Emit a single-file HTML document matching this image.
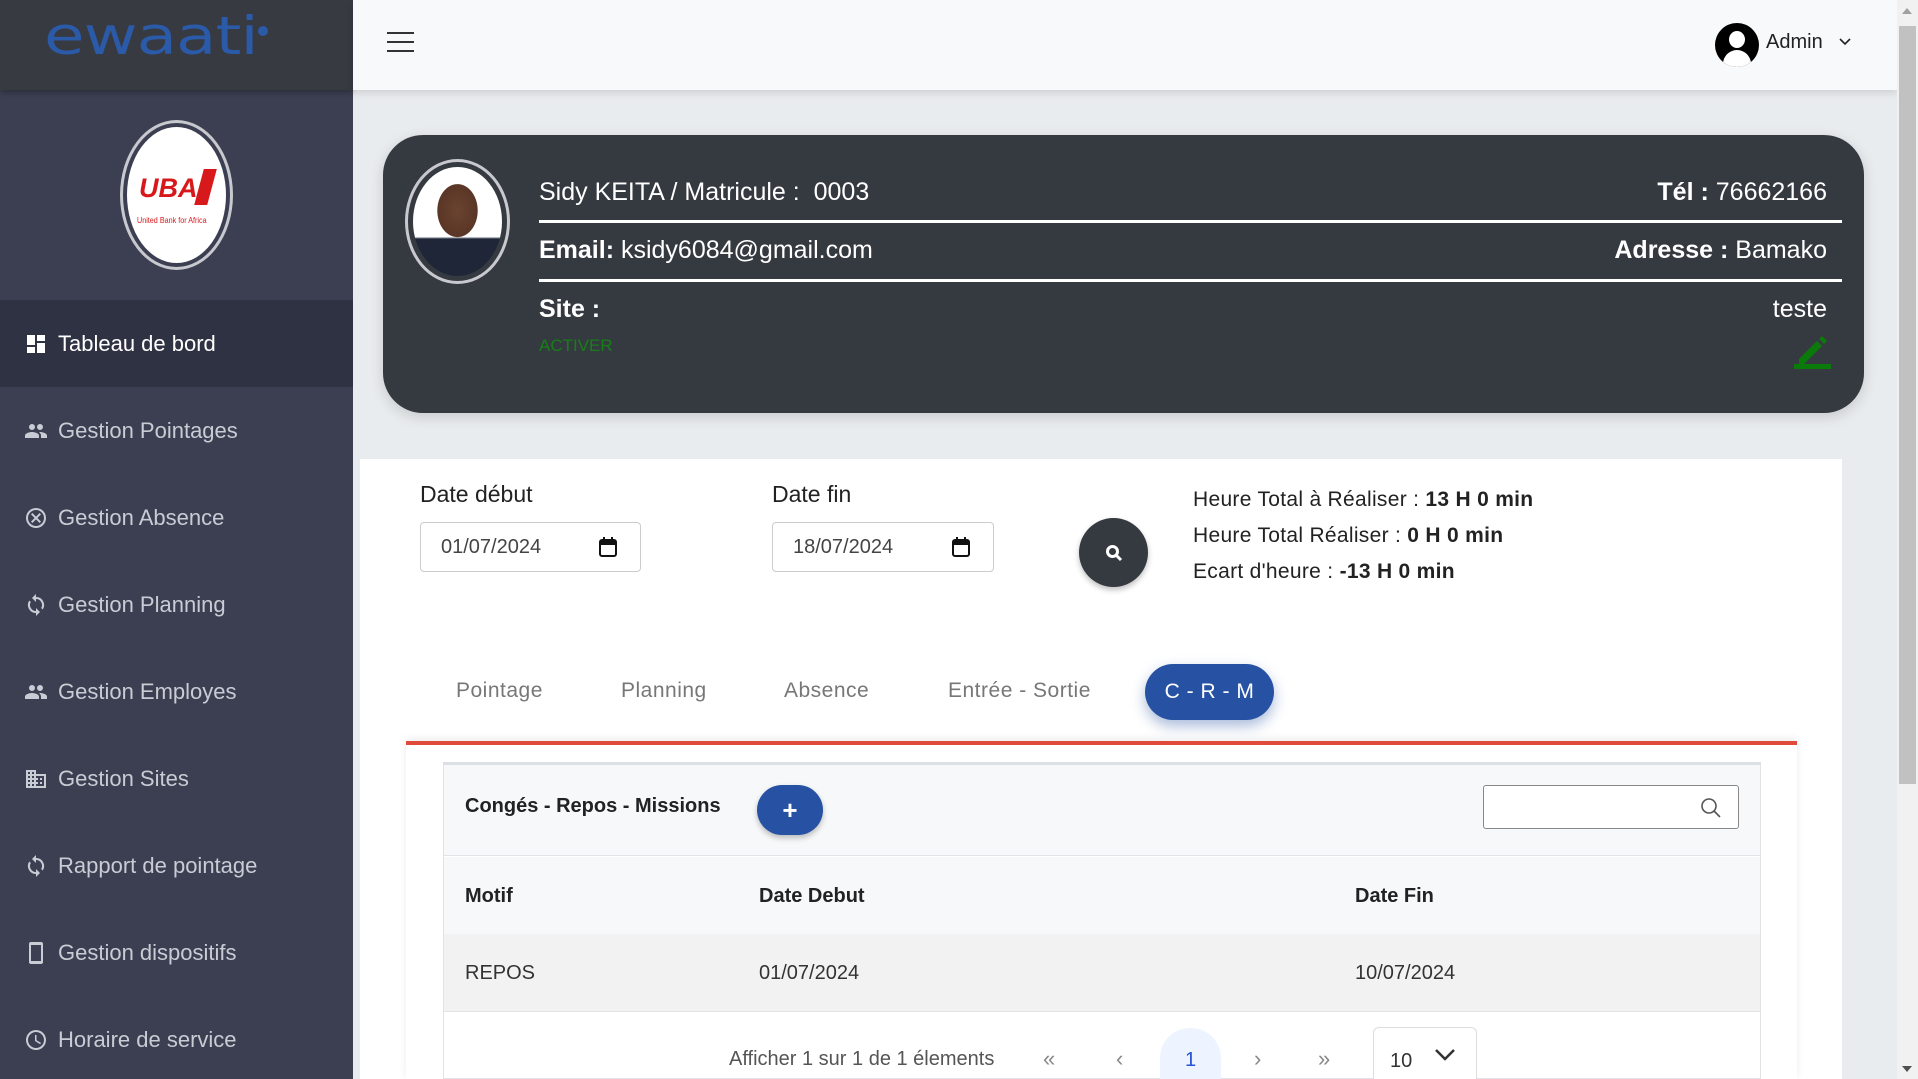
<!DOCTYPE html>
<html><head><meta charset="utf-8"><style>
*{box-sizing:border-box;margin:0;padding:0}
html,body{width:1918px;height:1079px;overflow:hidden}
body{background:#e9ecef;font-family:"Liberation Sans",sans-serif;position:relative}
.abs{position:absolute}
#sb{left:0;top:0;width:353px;height:1079px;background:#3b3f51}
#logo{left:0;top:0;width:353px;height:90px;background:#373a41;box-shadow:0 2px 6px rgba(0,0,0,.3)}
.mi{position:absolute;left:0;width:353px;height:87px;display:flex;align-items:center;color:#c9ccd4;font-size:22px}
.mi svg{margin-left:24px;margin-right:10px;width:24px;height:24px;fill:#c9ccd4}
.mi.act{background:#2e3242;color:#fff}
.mi.act svg{fill:#fff}
#hdr{left:353px;top:0;width:1544px;height:90px;background:#f8f9fa;box-shadow:0 3px 8px rgba(0,0,0,.12)}
#scroll{left:1897px;top:0;width:21px;height:1079px;background:#f1f1f1}
#card{left:383px;top:135px;width:1481px;height:278px;background:#353940;border-radius:40px;box-shadow:0 4px 14px rgba(0,0,0,.15);color:#fff}
.ct{position:absolute;font-size:25px}
.hl{position:absolute;left:156px;width:1303px;height:3px;background:#fff}
#panel{left:360px;top:459px;width:1482px;height:620px;background:#fff}
.lbl{position:absolute;font-size:23px;color:#222}
.inp{position:absolute;height:50px;border:1px solid #ccc;border-radius:4px;font-size:20px;color:#444;padding:13px 0 0 20px}
.stat{position:absolute;left:1193px;font-size:21px;color:#222;letter-spacing:.3px}
.stat b{font-weight:bold}
.tab{position:absolute;top:679px;font-size:21px;color:#777;letter-spacing:.5px}
</style></head><body>
<div id="sb" class="abs"></div>
<div id="logo" class="abs">
<div class="abs" style="left:44px;top:10px;font-size:66px;color:#2a5aa8;font-family:'DejaVu Sans',sans-serif;line-height:66px;letter-spacing:-1px;transform:scaleY(.8);transform-origin:top left">ewaati</div>
<div class="abs" style="left:258px;top:26px;width:10px;height:10px;border-radius:50%;background:#2a5aa8"></div>
</div>
<div class="abs" style="left:120px;top:120px;width:113px;height:150px;border-radius:50%;border:3px solid #c8c9cf;padding:4px">
<div style="width:100%;height:100%;border-radius:50%;background:#fff;position:relative;overflow:hidden">
<div class="abs" style="left:12px;top:46px;font-size:27px;font-weight:bold;font-style:italic;color:#d7191c">UBA</div>
<div class="abs" style="left:72px;top:42px;width:13px;height:36px;background:#d7191c;transform:skewX(-15deg)"></div>
<div class="abs" style="left:10px;top:89px;font-size:8px;color:#d7191c;white-space:nowrap;transform:scaleX(.9);transform-origin:left">United Bank for Africa</div>
</div></div>

<div class="mi act" style="top:300px"><svg viewBox="0 0 24 24"><path d="M3 3h8v10H3zM13 3h8v6h-8zM13 11h8v10h-8zM3 15h8v6H3z"/></svg>Tableau de bord</div>
<div class="mi" style="top:387px"><svg viewBox="0 0 24 24"><path d="M16 11a3 3 0 100-6 3 3 0 000 6zm-8 0a3 3 0 100-6 3 3 0 000 6zm0 2c-2.3 0-7 1.2-7 3.5V19h14v-2.5C15 14.2 10.3 13 8 13zm8 0c-.3 0-.6 0-1 .1 1.2.8 2 2 2 3.4V19h6v-2.5c0-2.3-4.7-3.5-7-3.5z"/></svg>Gestion Pointages</div>
<div class="mi" style="top:474px"><svg viewBox="0 0 24 24"><path d="M12 2a10 10 0 100 20 10 10 0 000-20zm0 18a8 8 0 110-16 8 8 0 010 16zm3.6-13L12 10.6 8.4 7 7 8.4l3.6 3.6L7 15.6 8.4 17l3.6-3.6 3.6 3.6 1.4-1.4-3.6-3.6L17 8.4z"/></svg>Gestion Absence</div>
<div class="mi" style="top:561px"><svg viewBox="0 0 24 24"><path d="M12 4V1L8 5l4 4V6a6 6 0 015.2 9l1.5 1.5A8 8 0 0012 4zm0 14a6 6 0 01-5.2-9L5.3 7.5A8 8 0 0012 20v3l4-4-4-4z"/></svg>Gestion Planning</div>
<div class="mi" style="top:648px"><svg viewBox="0 0 24 24"><path d="M16 11a3 3 0 100-6 3 3 0 000 6zm-8 0a3 3 0 100-6 3 3 0 000 6zm0 2c-2.3 0-7 1.2-7 3.5V19h14v-2.5C15 14.2 10.3 13 8 13zm8 0c-.3 0-.6 0-1 .1 1.2.8 2 2 2 3.4V19h6v-2.5c0-2.3-4.7-3.5-7-3.5z"/></svg>Gestion Employes</div>
<div class="mi" style="top:735px"><svg viewBox="0 0 24 24"><path d="M12 7V3H2v18h20V7H12zM6 19H4v-2h2v2zm0-4H4v-2h2v2zm0-4H4V9h2v2zm0-4H4V5h2v2zm4 12H8v-2h2v2zm0-4H8v-2h2v2zm0-4H8V9h2v2zm0-4H8V5h2v2zm10 12h-8v-2h2v-2h-2v-2h2v-2h-2V9h8v10zm-2-8h-2v2h2v-2zm0 4h-2v2h2v-2z"/></svg>Gestion Sites</div>
<div class="mi" style="top:822px"><svg viewBox="0 0 24 24"><path d="M12 4V1L8 5l4 4V6a6 6 0 015.2 9l1.5 1.5A8 8 0 0012 4zm0 14a6 6 0 01-5.2-9L5.3 7.5A8 8 0 0012 20v3l4-4-4-4z"/></svg>Rapport de pointage</div>
<div class="mi" style="top:909px"><svg viewBox="0 0 24 24"><path d="M17 1H7a2 2 0 00-2 2v18a2 2 0 002 2h10a2 2 0 002-2V3a2 2 0 00-2-2zm0 19H7V4h10v16z"/></svg>Gestion dispositifs</div>
<div class="mi" style="top:996px"><svg viewBox="0 0 24 24"><path d="M12 2a10 10 0 100 20 10 10 0 000-20zm0 18a8 8 0 110-16 8 8 0 010 16zm.5-13H11v6l5.2 3.2.8-1.3-4.5-2.7z"/></svg>Horaire de service</div>

<div id="hdr" class="abs">
<div class="abs" style="left:34px;top:32px;width:27px;height:2px;background:#333;box-shadow:0 9px 0 #333,0 18px 0 #333"></div>
<div class="abs" style="left:1362px;top:23px;width:44px;height:44px;border-radius:50%;background:#000;overflow:hidden">
<div class="abs" style="left:14px;top:8px;width:16px;height:17px;border-radius:50%;background:#fff"></div>
<div class="abs" style="left:8px;top:27px;width:28px;height:20px;border-radius:14px 14px 0 0;background:#fff"></div></div>
<div class="abs" style="left:1413px;top:31px;font-size:20px;color:#222">Admin</div>
<svg class="abs" style="left:1486px;top:38px" width="12" height="8" viewBox="0 0 12 8"><path d="M1 1l5 5 5-5" fill="none" stroke="#222" stroke-width="1.6"/></svg>
</div>
<div id="scroll" class="abs"><div class="abs" style="left:2px;top:26px;width:17px;height:758px;background:#c1c1c1"></div>
<div class="abs" style="left:5px;top:8px;border:5px solid transparent;border-bottom:6px solid #a0a0a0;border-top:0"></div>
<div class="abs" style="left:5px;top:1066px;border:5px solid transparent;border-top:6px solid #505050;border-bottom:0"></div></div>

<div id="card" class="abs">
<div class="abs" style="left:22px;top:24px;width:105px;height:125px;border-radius:50%;border:3px solid #c8c9cf;padding:5px"><div style="width:100%;height:100%;border-radius:50%;background:radial-gradient(ellipse 28% 30% at 50% 40%,#6b4330 0,#5a3626 80%,transparent 82%),linear-gradient(#fff 0,#fff 64%,#1f2638 66%)"></div></div>
<div class="ct" style="left:156px;top:43px">Sidy KEITA / Matricule :&nbsp; 0003</div>
<div class="ct" style="right:37px;top:43px"><b>Tél :</b> 76662166</div>
<div class="hl" style="top:85px"></div>
<div class="ct" style="left:156px;top:101px"><b>Email:</b> ksidy6084@gmail.com</div>
<div class="ct" style="right:37px;top:101px"><b>Adresse :</b> Bamako</div>
<div class="hl" style="top:144px"></div>
<div class="ct" style="left:156px;top:160px"><b>Site :</b></div>
<div class="ct" style="right:37px;top:160px">teste</div>
<div class="abs" style="left:156px;top:201px;font-size:17px;color:#168016">ACTIVER</div>
<svg class="abs" style="left:1408px;top:194px" width="40" height="40" viewBox="0 0 40 40"><path d="M8 30 L26 12 L31 17 L13 35 L8 35Z M28 10 L31 7 L36 12 L33 15Z" fill="#0a7a0a"/><rect x="3" y="35" width="37" height="5" fill="#0a7a0a"/></svg>
</div>

<div id="panel" class="abs"></div>
<div class="lbl" style="left:420px;top:481px">Date début</div>
<div class="lbl" style="left:772px;top:481px">Date fin</div>
<div class="inp" style="left:420px;top:522px;width:221px">01/07/2024</div>
<div class="inp" style="left:772px;top:522px;width:222px">18/07/2024</div>
<svg class="abs" style="left:598px;top:536px" width="20" height="22" viewBox="0 0 20 22"><rect x="2" y="4" width="16" height="16" rx="2" fill="none" stroke="#111" stroke-width="2"/><rect x="2" y="4" width="16" height="5" fill="#111"/><rect x="5" y="1" width="2" height="4" fill="#111"/><rect x="13" y="1" width="2" height="4" fill="#111"/></svg>
<svg class="abs" style="left:951px;top:536px" width="20" height="22" viewBox="0 0 20 22"><rect x="2" y="4" width="16" height="16" rx="2" fill="none" stroke="#111" stroke-width="2"/><rect x="2" y="4" width="16" height="5" fill="#111"/><rect x="5" y="1" width="2" height="4" fill="#111"/><rect x="13" y="1" width="2" height="4" fill="#111"/></svg>
<div class="abs" style="left:1079px;top:518px;width:69px;height:69px;border-radius:50%;background:#353940;box-shadow:0 3px 6px rgba(0,0,0,.25)">
<svg class="abs" style="left:26px;top:26px" width="18" height="18" viewBox="0 0 18 18"><circle cx="7.5" cy="7.5" r="5" fill="none" stroke="#fff" stroke-width="3"/><path d="M11 11l5 5" stroke="#fff" stroke-width="3"/></svg></div>
<div class="stat" style="top:488px">Heure Total à Réaliser : <b>13 H 0 min</b></div>
<div class="stat" style="top:524px">Heure Total Réaliser : <b>0 H 0 min</b></div>
<div class="stat" style="top:560px">Ecart d'heure : <b>-13 H 0 min</b></div>

<div class="tab" style="left:456px">Pointage</div>
<div class="tab" style="left:621px">Planning</div>
<div class="tab" style="left:784px">Absence</div>
<div class="tab" style="left:948px">Entrée - Sortie</div>
<div class="abs" style="left:1145px;top:664px;width:129px;height:56px;border-radius:28px;background:#2752a3;color:#fff;font-size:21px;text-align:center;line-height:56px;letter-spacing:.5px;box-shadow:0 6px 14px rgba(39,82,163,.4)">C - R - M</div>

<div class="abs" style="left:406px;top:741px;width:1391px;height:338px;background:#fff;border-top:4px solid #e04a3a;box-shadow:0 -2px 8px rgba(0,0,0,.08)"></div>
<div class="abs" style="left:443px;top:762px;width:1318px;height:317px;background:#fff;border:1px solid #e1e3e6;border-top:3px solid #dcdfe3"></div>
<div class="abs" style="left:444px;top:765px;width:1316px;height:91px;background:#f7f8fa;border-bottom:1px solid #e1e3e6"></div>
<div class="abs" style="left:465px;top:795px;font-size:20px;font-weight:bold;color:#222">Congés - Repos - Missions</div>
<div class="abs" style="left:757px;top:785px;width:66px;height:50px;border-radius:25px;background:#2752a3;color:#fff;font-size:26px;font-weight:bold;text-align:center;line-height:50px;box-shadow:0 3px 6px rgba(0,0,0,.25)">+</div>
<div class="abs" style="left:1483px;top:785px;width:256px;height:44px;border:1px solid #888;border-radius:3px;background:#fff">
<svg class="abs" style="left:215px;top:10px" width="24" height="24" viewBox="0 0 24 24"><circle cx="10" cy="10" r="7" fill="none" stroke="#555" stroke-width="1.6"/><path d="M15 15l6 6" stroke="#555" stroke-width="1.6"/></svg></div>
<div class="abs" style="left:444px;top:857px;width:1316px;height:77px;background:#f7f8fa"></div>
<div class="abs" style="left:465px;top:885px;font-size:20px;font-weight:bold;color:#222">Motif</div>
<div class="abs" style="left:759px;top:885px;font-size:20px;font-weight:bold;color:#222">Date Debut</div>
<div class="abs" style="left:1355px;top:885px;font-size:20px;font-weight:bold;color:#222">Date Fin</div>
<div class="abs" style="left:444px;top:934px;width:1316px;height:78px;background:#f2f2f2;border-bottom:1px solid #e1e3e6"></div>
<div class="abs" style="left:465px;top:962px;font-size:20px;color:#333">REPOS</div>
<div class="abs" style="left:759px;top:962px;font-size:20px;color:#333">01/07/2024</div>
<div class="abs" style="left:1355px;top:962px;font-size:20px;color:#333">10/07/2024</div>
<div class="abs" style="left:729px;top:1048px;font-size:20px;color:#555">Afficher 1 sur 1 de 1 élements</div>
<div class="abs" style="left:1043px;top:1046px;font-size:22px;color:#888">«</div>
<div class="abs" style="left:1116px;top:1046px;font-size:22px;color:#888">‹</div>
<div class="abs" style="left:1160px;top:1028px;width:61px;height:51px;border-radius:30px 30px 0 0;background:#eef4ff;color:#2752d3;font-size:20px;text-align:center;line-height:64px">1</div>
<div class="abs" style="left:1254px;top:1046px;font-size:22px;color:#888">›</div>
<div class="abs" style="left:1318px;top:1046px;font-size:22px;color:#888">»</div>
<div class="abs" style="left:1373px;top:1027px;width:104px;height:52px;border:1px solid #ddd;border-bottom:0;border-radius:6px 6px 0 0;background:#fff">
<div class="abs" style="left:16px;top:22px;font-size:20px;color:#333">10</div>
<svg class="abs" style="left:60px;top:20px" width="22" height="14" viewBox="0 0 22 14"><path d="M2 2l9 9 9-9" fill="none" stroke="#333" stroke-width="2.5"/></svg></div>
</body></html>
